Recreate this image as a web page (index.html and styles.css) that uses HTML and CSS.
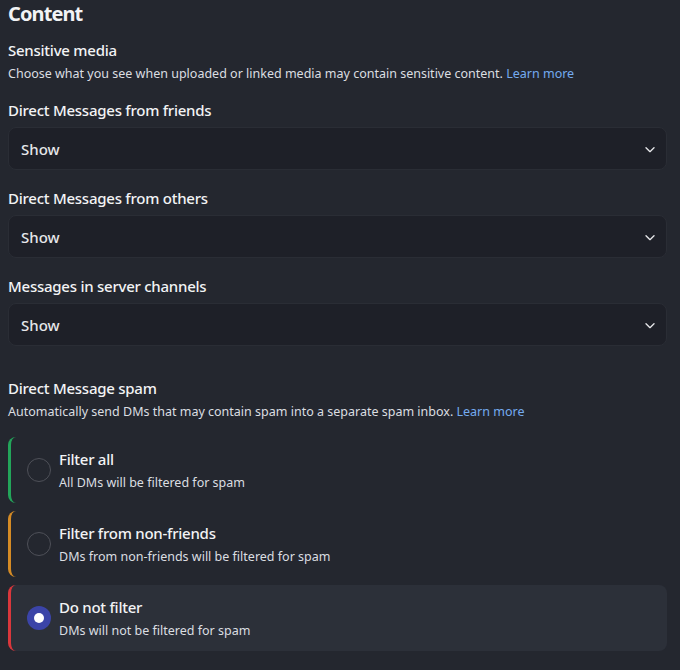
FILE: index.html
```html
<!DOCTYPE html>
<html>
<head>
<meta charset="utf-8">
<link rel="stylesheet" href="styles.css">
</head>
<body>
<div class="page">
  <h1 class="title">Content</h1>

  <section class="group">
    <h2 class="label">Sensitive media</h2>
    <p class="desc">Choose what you see when uploaded or linked media may contain sensitive content. <a class="link">Learn more</a></p>
  </section>

  <section class="field">
    <h3 class="label">Direct Messages from friends</h3>
    <div class="select"><span>Show</span>
      <svg class="chev" width="16" height="16" viewBox="0 0 24 24"><path d="M5.3 9.3a1 1 0 0 1 1.4 0L12 14.58l5.3-5.3a1 1 0 1 1 1.4 1.42l-6 6a1 1 0 0 1-1.4 0l-6-6a1 1 0 0 1 0-1.42Z" fill="currentColor"/></svg>
    </div>
  </section>

  <section class="field">
    <h3 class="label">Direct Messages from others</h3>
    <div class="select"><span>Show</span>
      <svg class="chev" width="16" height="16" viewBox="0 0 24 24"><path d="M5.3 9.3a1 1 0 0 1 1.4 0L12 14.58l5.3-5.3a1 1 0 1 1 1.4 1.42l-6 6a1 1 0 0 1-1.4 0l-6-6a1 1 0 0 1 0-1.42Z" fill="currentColor"/></svg>
    </div>
  </section>

  <section class="field">
    <h3 class="label">Messages in server channels</h3>
    <div class="select"><span>Show</span>
      <svg class="chev" width="16" height="16" viewBox="0 0 24 24"><path d="M5.3 9.3a1 1 0 0 1 1.4 0L12 14.58l5.3-5.3a1 1 0 1 1 1.4 1.42l-6 6a1 1 0 0 1-1.4 0l-6-6a1 1 0 0 1 0-1.42Z" fill="currentColor"/></svg>
    </div>
  </section>

  <section class="spam">
    <h2 class="label">Direct Message spam</h2>
    <p class="desc">Automatically send DMs that may contain spam into a separate spam inbox. <a class="link">Learn more</a></p>

    <div class="options">
      <div class="option green">
        <span class="radio"></span>
        <div class="otext">
          <div class="otitle">Filter all</div>
          <div class="odesc">All DMs will be filtered for spam</div>
        </div>
      </div>
      <div class="option orange">
        <span class="radio"></span>
        <div class="otext">
          <div class="otitle">Filter from non-friends</div>
          <div class="odesc">DMs from non-friends will be filtered for spam</div>
        </div>
      </div>
      <div class="option red selected">
        <span class="radio checked"></span>
        <div class="otext">
          <div class="otitle">Do not filter</div>
          <div class="odesc">DMs will not be filtered for spam</div>
        </div>
      </div>
    </div>
  </section>
</div>
</body>
</html>
```

FILE: styles.css
```css
html, body {
  margin: 0;
  padding: 0;
  background: #24272f;
}
body {
  font-family: "Noto Sans", "Open Sans", sans-serif;
  color: #f2f3f5;
}
.page {
  padding: 0 13px 0 8px;
}
.title {
  margin: 0;
  padding-top: 1px;
  font-size: 20px;
  line-height: 26px;
  font-weight: 700;
  letter-spacing: -0.9px;
  color: #f2f3f5;
}
.group {
  margin-top: 13px;
}
.label {
  margin: 0;
  font-size: 15px;
  line-height: 20px;
  font-weight: 500;
  letter-spacing: -0.25px;
  color: #f2f3f5;
}
.desc {
  margin: 6px 0 0;
  font-size: 12.5px;
  line-height: 16px;
  color: #dbdee1;
}
.link {
  color: #74abf0;
}
.field {
  margin-top: 18px;
}
.select {
  margin-top: 7px;
  height: 43px;
  box-sizing: border-box;
  border: 1px solid #2a2d35;
  background: #1e2028;
  border-radius: 8px;
  display: flex;
  align-items: center;
  justify-content: space-between;
  padding: 0 8px 0 12px;
  font-size: 15px;
  font-weight: 500;
  color: #e6e7ea;
}
.chev {
  color: #e6e7ea;
}
.spam {
  margin-top: 32px;
}
.options {
  margin-top: 17px;
  display: flex;
  flex-direction: column;
  gap: 8px;
}
.option {
  height: 66px;
  box-sizing: border-box;
  border-radius: 8px;
  border-left: 3px solid;
  display: flex;
  align-items: center;
  gap: 8px;
  padding-left: 16px;
}
.green { border-left-color: #23a55a; }
.orange { border-left-color: #d58b25; }
.red { border-left-color: #da373c; }
.selected { background: #2c3039; }
.radio {
  width: 22px;
  height: 22px;
  border-radius: 50%;
  border: 1px solid #4e5058;
  flex: none;
}
.radio.checked {
  width: 24px;
  height: 24px;
  border: none;
  background: #3b44a8;
  display: flex;
  align-items: center;
  justify-content: center;
}
.radio.checked::after {
  content: "";
  width: 10px;
  height: 10px;
  border-radius: 50%;
  background: #ffffff;
}
.otitle {
  font-size: 15px;
  line-height: 20px;
  font-weight: 500;
  letter-spacing: -0.25px;
  color: #f2f3f5;
}
.odesc {
  margin-top: 6px;
  font-size: 12.5px;
  line-height: 16px;
  color: #dbdee1;
}
```
